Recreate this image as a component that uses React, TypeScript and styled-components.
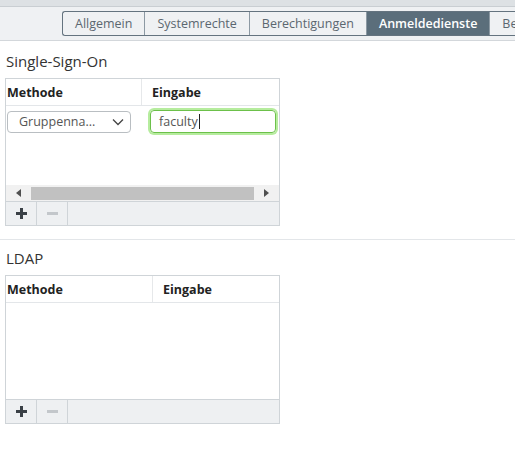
import React from 'react'
import styled, { createGlobalStyle } from 'styled-components'

const GlobalStyle = createGlobalStyle`
  html, body {
    margin: 0;
    padding: 0;
    background: #fff;
  }
  body {
    font-family: 'Open Sans', 'Noto Sans', sans-serif;
    font-size: 13px;
    color: #333;
  }
`

const Page = styled.div`
  width: 515px;
  height: 450px;
  overflow: hidden;
  background: #fff;
`

const TopStrip = styled.div`
  height: 6px;
  background: #dde1e4;
  border-bottom: 1px solid #c9ced2;
`

const TabBar = styled.div`
  height: 34px;
  background: #eff1f3;
  border-bottom: 1px solid #d3d7db;
  display: flex;
  align-items: flex-start;
  padding: 4px 0 0 62px;
  box-sizing: border-box;
  overflow: hidden;
`

const Tabs = styled.div`
  display: flex;
  flex-shrink: 0;
  border: 1px solid #64737f;
  border-right: none;
  border-radius: 3px 0 0 3px;
  height: 25px;
  box-sizing: border-box;
`

const Tab = styled.div<{ $active?: boolean }>`
  height: 100%;
  display: flex;
  align-items: center;
  padding: 0 12px;
  white-space: nowrap;
  font-size: 12.5px;
  color: ${(p) => (p.$active ? '#fff' : '#5b6770')};
  background: ${(p) => (p.$active ? '#5b6e7b' : 'transparent')};
  font-weight: ${(p) => (p.$active ? 600 : 400)};
  border-right: 1px solid #8c99a3;
  &:first-child {
    border-radius: 3px 0 0 3px;
  }
`

const Section = styled.section<{ $divider?: boolean }>`
  padding: 10px 0 13px 5px;
  border-bottom: ${(p) => (p.$divider ? '1px solid #e3e6e9' : 'none')};
  & + & {
    padding-top: 8px;
  }
`

const SectionTitle = styled.h2`
  margin: 0 0 7px 1px;
  font-size: 15px;
  font-weight: 400;
  color: #333;
  line-height: 20px;
`

const Table = styled.div`
  width: 275px;
  border: 1px solid #cfd4d8;
  box-sizing: border-box;
  display: flex;
  flex-direction: column;
`

const HeaderRow = styled.div<{ $first: number }>`
  display: grid;
  grid-template-columns: ${(p) => p.$first}px 1fr;
  height: 26px;
  border-bottom: 1px solid #e3e6e9;
`

const HeaderCell = styled.div`
  display: flex;
  align-items: center;
  padding-left: 1px;
  font-weight: 700;
  font-size: 12.5px;
  color: #222;
  & + & {
    border-left: 1px solid #e6e8ea;
    padding-left: 10px;
  }
`

const Body = styled.div<{ $height: number }>`
  height: ${(p) => p.$height}px;
  display: flex;
  flex-direction: column;
  justify-content: space-between;
`

const DataRow = styled.div`
  display: grid;
  grid-template-columns: 135px 1fr;
  align-items: center;
  padding-top: 4px;
`

const SelectBox = styled.div`
  margin-left: 1px;
  width: 124px;
  height: 22px;
  box-sizing: border-box;
  border: 1px solid #b9bec2;
  border-radius: 4px;
  display: flex;
  align-items: center;
  justify-content: space-between;
  padding: 0 6px 0 11px;
  color: #555;
  font-size: 12.5px;
`

const TextInput = styled.div`
  margin-left: 9px;
  width: 126px;
  height: 23px;
  box-sizing: border-box;
  border: 1px solid #6cc04a;
  border-radius: 4px;
  box-shadow: 0 0 0 2px #b6ec9e;
  display: flex;
  align-items: center;
  padding-left: 8px;
  color: #555;
  font-size: 12.5px;
`

const Caret = styled.span`
  display: inline-block;
  width: 1px;
  height: 15px;
  background: #222;
  margin-left: 1px;
`

const ScrollBar = styled.div`
  height: 16px;
  background: #f1f1f1;
  display: flex;
  align-items: center;
`

const ScrollArrow = styled.div`
  width: 25px;
  display: flex;
  justify-content: center;
`

const ScrollThumb = styled.div`
  flex: 1;
  height: 13px;
  background: #c1c1c1;
`

const Toolbar = styled.div`
  height: 23px;
  background: #eef0f2;
  border-top: 1px solid #cfd4d8;
  display: flex;
`

const ToolButton = styled.div`
  width: 30px;
  border-right: 1px solid #cfd4d8;
  display: flex;
  align-items: center;
  justify-content: center;
`

const Chevron = () => (
  <svg width="12" height="8" viewBox="0 0 12 8">
    <path d="M1 1.5 L6 6.5 L11 1.5" fill="none" stroke="#444" strokeWidth="1.3" />
  </svg>
)

const Arrow = ({ dir }: { dir: 'left' | 'right' }) => (
  <svg width="5" height="8" viewBox="0 0 5 8">
    {dir === 'left' ? <path d="M5 0 L0 4 L5 8 Z" fill="#505050" /> : <path d="M0 0 L5 4 L0 8 Z" fill="#505050" />}
  </svg>
)

const Plus = () => (
  <svg width="11" height="11" viewBox="0 0 11 11">
    <rect x="4" y="0" width="3" height="11" fill="#3a4046" />
    <rect x="0" y="4" width="11" height="3" fill="#3a4046" />
  </svg>
)

const Minus = () => (
  <svg width="11" height="3" viewBox="0 0 11 3">
    <rect x="0" y="0" width="11" height="3" fill="#c3c7cb" />
  </svg>
)

const Footer = () => (
  <Toolbar>
    <ToolButton>
      <Plus />
    </ToolButton>
    <ToolButton>
      <Minus />
    </ToolButton>
  </Toolbar>
)

const tabs = ['Allgemein', 'Systemrechte', 'Berechtigungen', 'Anmeldedienste', 'Benutzer']

export default function App() {
  return (
    <Page>
      <GlobalStyle />
      <TopStrip />
      <TabBar>
        <Tabs>
          {tabs.map((t) => (
            <Tab key={t} $active={t === 'Anmeldedienste'}>
              {t}
            </Tab>
          ))}
        </Tabs>
      </TabBar>

      <Section $divider>
        <SectionTitle>Single-Sign-On</SectionTitle>
        <Table>
          <HeaderRow $first={135}>
            <HeaderCell>Methode</HeaderCell>
            <HeaderCell>Eingabe</HeaderCell>
          </HeaderRow>
          <Body $height={95}>
            <DataRow>
              <SelectBox>
                <span>Gruppenna...</span>
                <Chevron />
              </SelectBox>
              <TextInput>
                faculty
                <Caret />
              </TextInput>
            </DataRow>
            <ScrollBar>
              <ScrollArrow>
                <Arrow dir="left" />
              </ScrollArrow>
              <ScrollThumb />
              <ScrollArrow>
                <Arrow dir="right" />
              </ScrollArrow>
            </ScrollBar>
          </Body>
          <Footer />
        </Table>
      </Section>

      <Section>
        <SectionTitle>LDAP</SectionTitle>
        <Table>
          <HeaderRow $first={146}>
            <HeaderCell>Methode</HeaderCell>
            <HeaderCell>Eingabe</HeaderCell>
          </HeaderRow>
          <Body $height={96} />
          <Footer />
        </Table>
      </Section>
    </Page>
  )
}
